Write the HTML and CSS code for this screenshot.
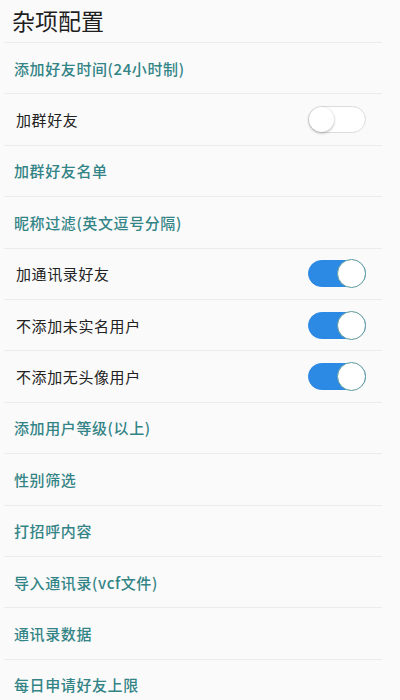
FILE: index.html
```html
<!DOCTYPE html>
<html lang="zh">
<head>
<meta charset="utf-8">
<link rel="stylesheet" href="styles.css">
</head>
<body>
<div class="page">
  <h1 class="title">杂项配置</h1>
  <ul class="list">
    <li class="row link">添加好友时间(24小时制)</li>
    <li class="row plain"><span>加群好友</span><span class="switch"><span class="knob"></span></span></li>
    <li class="row link">加群好友名单</li>
    <li class="row link">昵称过滤(英文逗号分隔)</li>
    <li class="row plain"><span>加通讯录好友</span><span class="switch on"><span class="knob"></span></span></li>
    <li class="row plain"><span>不添加未实名用户</span><span class="switch on"><span class="knob"></span></span></li>
    <li class="row plain"><span>不添加无头像用户</span><span class="switch on"><span class="knob"></span></span></li>
    <li class="row link">添加用户等级(以上)</li>
    <li class="row link">性别筛选</li>
    <li class="row link">打招呼内容</li>
    <li class="row link">导入通讯录(vcf文件)</li>
    <li class="row link">通讯录数据</li>
    <li class="row link">每日申请好友上限</li>
  </ul>
</div>
</body>
</html>
```
FILE: styles.css
```css
html, body {
  margin: 0;
  padding: 0;
  background: #fafafa;
}
body {
  font-family: "Noto Sans CJK SC", "Noto Sans", sans-serif;
  width: 400px;
  height: 700px;
  overflow: hidden;
}
.page {
  padding: 0 18px 0 4px;
}
.title {
  margin: 0;
  height: 43px;
  box-sizing: border-box;
  padding: 4px 0 0 8px;
  font-size: 23px;
  font-weight: 400;
  line-height: 32px;
  color: #1f1f1f;
  border-bottom: 1px solid #ececec;
}
.list {
  list-style: none;
  margin: 0;
  padding: 0;
}
.row {
  height: 50.4px;
  box-sizing: content-box;
  border-bottom: 1px solid #ececec;
  display: flex;
  align-items: center;
  justify-content: space-between;
  font-size: 15px;
  letter-spacing: 0.6px;
}
.link {
  padding-left: 10px;
  color: #338486;
  font-weight: 500;
}
.plain {
  padding-left: 12px;
  color: #222;
}
.switch {
  position: relative;
  width: 56px;
  height: 25px;
  border-radius: 14px;
  background: #fff;
  border: 1px solid #dcdcdc;
  margin-right: 16px;
  box-shadow: inset 0 0 1px rgba(0,0,0,0.05);
}
.knob {
  position: absolute;
  left: 0;
  top: 0;
  width: 25px;
  height: 25px;
  border-radius: 50%;
  background: #fff;
  box-shadow: 0 1px 3px rgba(0,0,0,0.3);
}
.switch.on {
  background: #2d8ae4;
  border-color: #2d8ae4;
}
.switch.on .knob {
  left: auto;
  right: -1px;
  top: -2px;
  width: 27px;
  height: 27px;
  border: 1px solid #5e9a9a;
  box-shadow: none;
}
```
